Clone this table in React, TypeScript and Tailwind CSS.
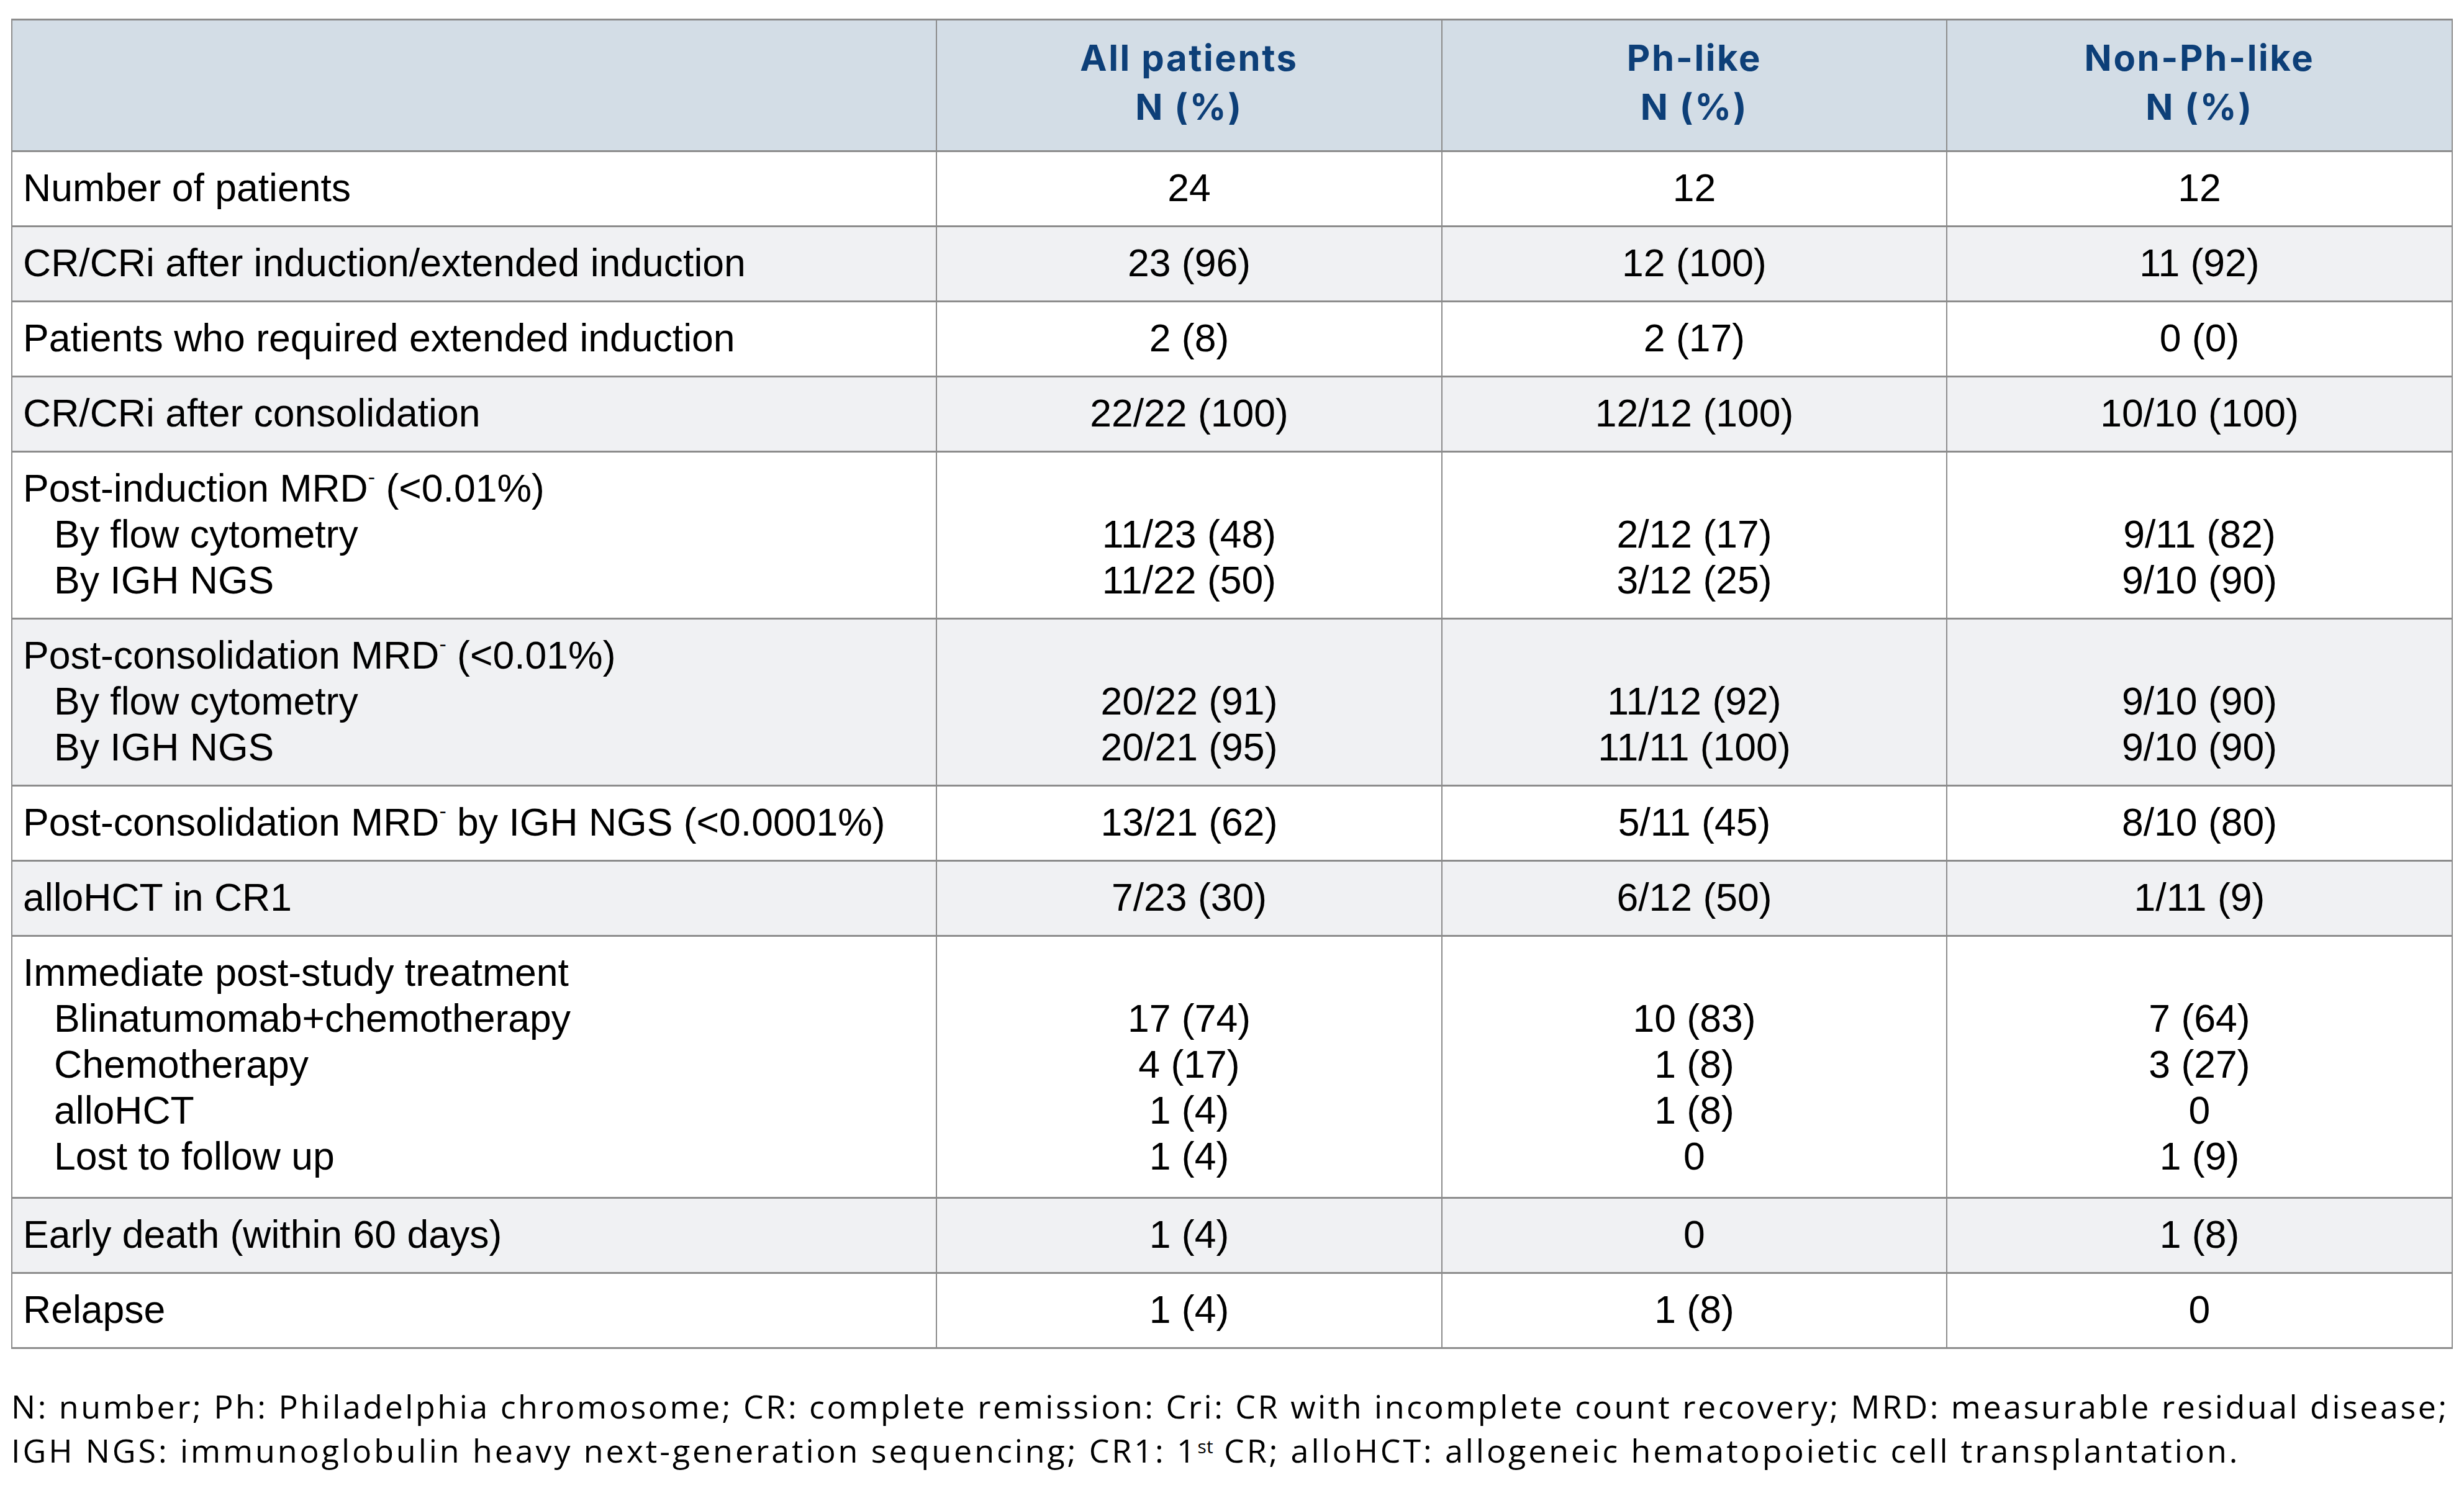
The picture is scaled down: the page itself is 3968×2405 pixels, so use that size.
import React from "react";

type Row = {
  label: React.ReactNode;
  values?: string[];
  subs?: { label: string; values: string[] }[];
  extra?: boolean;
};

const Neg = () => <span className="relative -top-[28px] text-[34px] leading-none">-</span>;

const rows: Row[] = [
  { label: "Number of patients", values: ["24", "12", "12"] },
  { label: "CR/CRi after induction/extended induction", values: ["23 (96)", "12 (100)", "11 (92)"] },
  { label: "Patients who required extended induction", values: ["2 (8)", "2 (17)", "0 (0)"] },
  { label: "CR/CRi after consolidation", values: ["22/22 (100)", "12/12 (100)", "10/10 (100)"] },
  {
    label: (
      <>
        Post-induction MRD<Neg /> (&lt;0.01%)
      </>
    ),
    subs: [
      { label: "By flow cytometry", values: ["11/23 (48)", "2/12 (17)", "9/11 (82)"] },
      { label: "By IGH NGS", values: ["11/22 (50)", "3/12 (25)", "9/10 (90)"] },
    ],
  },
  {
    label: (
      <>
        Post-consolidation MRD<Neg /> (&lt;0.01%)
      </>
    ),
    subs: [
      { label: "By flow cytometry", values: ["20/22 (91)", "11/12 (92)", "9/10 (90)"] },
      { label: "By IGH NGS", values: ["20/21 (95)", "11/11 (100)", "9/10 (90)"] },
    ],
  },
  {
    label: (
      <>
        Post-consolidation MRD<Neg /> by IGH NGS (&lt;0.0001%)
      </>
    ),
    values: ["13/21 (62)", "5/11 (45)", "8/10 (80)"],
  },
  { label: "alloHCT in CR1", values: ["7/23 (30)", "6/12 (50)", "1/11 (9)"] },
  {
    label: "Immediate post-study treatment",
    extra: true,
    subs: [
      { label: "Blinatumomab+chemotherapy", values: ["17 (74)", "10 (83)", "7 (64)"] },
      { label: "Chemotherapy", values: ["4 (17)", "1 (8)", "3 (27)"] },
      { label: "alloHCT", values: ["1 (4)", "1 (8)", "0"] },
      { label: "Lost to follow up", values: ["1 (4)", "0", "1 (9)"] },
    ],
  },
  { label: "Early death (within 60 days)", values: ["1 (4)", "0", "1 (8)"] },
  { label: "Relapse", values: ["1 (4)", "1 (8)", "0"] },
];

const headers = ["All patients", "Ph-like", "Non-Ph-like"];

export default function App() {
  return (
    <div className="min-h-screen bg-white pt-[30px] pl-[18px]">
      <table className="table-fixed w-[3930px] border-collapse [font-family:'Liberation_Sans',Arial,sans-serif] text-[62.5px] leading-[74px] text-black">
        <colgroup>
          <col className="w-[1489px]" />
          <col className="w-[814px]" />
          <col className="w-[813px]" />
          <col className="w-[814px]" />
        </colgroup>
        <thead>
          <tr className="bg-[#d3dde6] h-[212px]">
            <th className="border-y-[3px] border-x-2 border-[#8c8c8c]" />
            {headers.map((h) => (
              <th
                key={h}
                className="border-y-[3px] border-x-2 border-[#8c8c8c] pb-[10px] align-middle text-center [font-family:'Inter',sans-serif] font-bold text-[58px] leading-[79px] tracking-[2.6px] text-[#0d3f78]"
              >
                {h}
                <br />N (%)
              </th>
            ))}
          </tr>
        </thead>
        <tbody>
          {rows.map((r, i) => (
            <tr key={i} className={i % 2 === 1 ? "bg-[#f0f1f3]" : "bg-white"}>
              <td
                className={`border-y-[3px] border-x-2 border-[#8c8c8c] pl-[17px] pt-[20px] align-top text-left ${
                  r.extra ? "pb-[29px]" : "pb-[24px]"
                }`}
              >
                <div>{r.label}</div>
                {r.subs?.map((s) => (
                  <div key={s.label} className="pl-[50px]">
                    {s.label}
                  </div>
                ))}
              </td>
              {[0, 1, 2].map((c) => (
                <td
                  key={c}
                  className="border-y-[3px] border-x-2 border-[#8c8c8c] pt-[20px] pb-[24px] align-top text-center"
                >
                  {r.values ? (
                    <div>{r.values[c]}</div>
                  ) : (
                    <>
                      <div>&nbsp;</div>
                      {r.subs?.map((s) => (
                        <div key={s.label}>{s.values[c]}</div>
                      ))}
                    </>
                  )}
                </td>
              ))}
            </tr>
          ))}
        </tbody>
      </table>
      <p className="mt-[56px] [font-family:'Open_Sans',sans-serif] text-[52px] leading-[71px] tracking-[3.5px] text-black">
        N: number; Ph: Philadelphia chromosome; CR: complete remission: Cri: CR with incomplete count recovery; MRD: measurable residual disease;
        <br />
        <span className="tracking-[3.9px]">
          IGH NGS: immunoglobulin heavy next-generation sequencing; CR1: 1<sup className="text-[30px] tracking-normal">st</sup> CR; alloHCT: allogeneic hematopoietic cell transplantation.
        </span>
      </p>
    </div>
  );
}
